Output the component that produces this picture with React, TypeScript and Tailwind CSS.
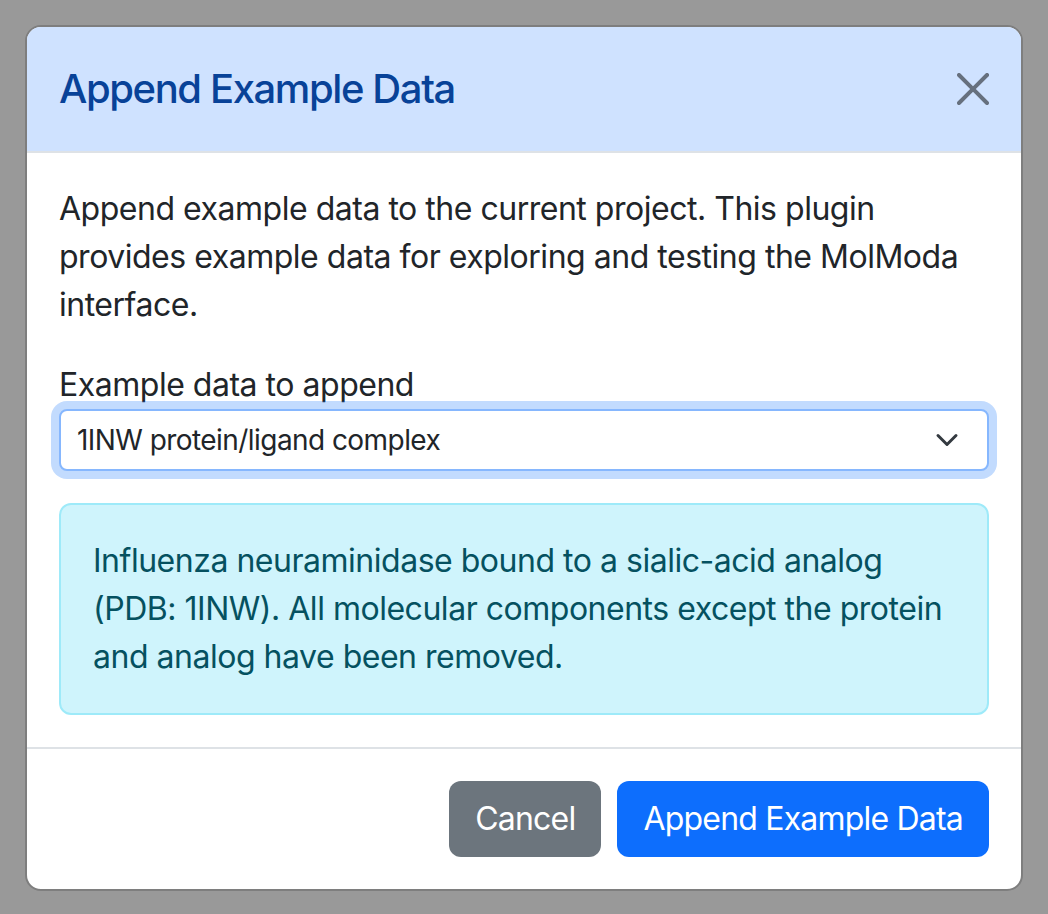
import { useState } from 'react'

const FONT = { fontFamily: 'Inter, "Noto Sans", "Liberation Sans", sans-serif' }

const examples = ['1INW protein/ligand complex']

export default function App() {
  const [choice, setChoice] = useState(examples[0])

  return (
    <div className="min-h-[914px] bg-[#999999] p-[25px] tracking-[-0.03em]" style={FONT}>
      <div className="overflow-hidden rounded-[16px] border-2 border-[#7e7e7e] bg-white">
        {/* header */}
        <div className="flex items-center justify-between border-b-2 border-[#dee2e6] bg-[#cfe2ff] px-[32px] py-[32px]">
          <h5 className="text-[40px] font-medium leading-[60px] tracking-[-0.035em] text-[#084298]">Append Example Data</h5>
          <button type="button" aria-label="Close" className="flex h-[32px] w-[32px] items-center justify-center opacity-50">
            <svg viewBox="0 0 16 16" className="h-[32px] w-[32px]" fill="#000">
              <path d="M.293.293a1 1 0 0 1 1.414 0L8 6.586 14.293.293a1 1 0 1 1 1.414 1.414L9.414 8l6.293 6.293a1 1 0 0 1-1.414 1.414L8 9.414l-6.293 6.293a1 1 0 0 1-1.414-1.414L6.586 8 .293 1.707a1 1 0 0 1 0-1.414z" />
            </svg>
          </button>
        </div>

        {/* body */}
        <div className="p-[32px] text-[32px] leading-[48px] text-[#212529]">
          <p className="mb-[32px]">
            Append example data to the current project. This plugin
            <br />
            provides example data for exploring and testing the MolModa
            <br />
            interface.
          </p>

          <label className="block">Example data to append</label>
          <div className="relative">
            <select
              value={choice}
              onChange={(e) => setChoice(e.target.value)}
              className="block h-[62px] w-full appearance-none rounded-[8px] border-2 border-[#86b7fe] bg-white pl-[16px] pr-[64px] text-[28px] leading-[42px] tracking-[-0.02em] text-[#212529] shadow-[0_0_0_8px_rgba(13,110,253,0.25)] outline-none"
              style={FONT}
            >
              {examples.map((item) => (
                <option key={item}>{item}</option>
              ))}
            </select>
            <svg
              viewBox="0 0 16 16"
              className="pointer-events-none absolute right-[30px] top-1/2 h-[24px] w-[24px] -translate-y-1/2"
              fill="none"
              stroke="#343a40"
              strokeWidth="2"
              strokeLinecap="round"
              strokeLinejoin="round"
            >
              <path d="m2 5 6 6 6-6" />
            </svg>
          </div>

          <div className="mt-[32px] rounded-[12px] border-2 border-[#9eeaf9] bg-[#cff4fc] p-[32px] text-[#055160]">
            Influenza neuraminidase bound to a sialic-acid analog
            <br />
            (PDB: 1INW). All molecular components except the protein
            <br />
            and analog have been removed.
          </div>
        </div>

        {/* footer */}
        <div className="flex justify-end gap-[16px] border-t-2 border-[#dee2e6] px-[32px] py-[32px]">
          <button type="button" className="h-[76px] rounded-[12px] bg-[#6c757d] px-[26px] text-[32px] leading-[48px] tracking-[-0.025em] text-white">
            Cancel
          </button>
          <button type="button" className="h-[76px] rounded-[12px] bg-[#0d6efd] px-[26px] text-[32px] leading-[48px] tracking-[-0.025em] text-white">
            Append Example Data
          </button>
        </div>
      </div>
    </div>
  )
}
